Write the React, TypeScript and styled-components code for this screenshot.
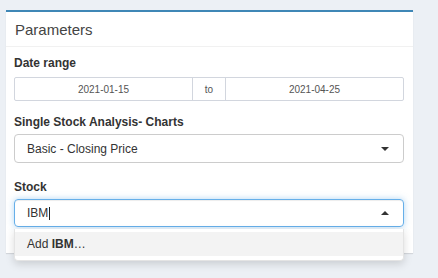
import React from 'react';
import styled, { createGlobalStyle } from 'styled-components';

const GlobalStyle = createGlobalStyle`
  html, body {
    margin: 0;
    padding: 0;
    background: #ecf0f5;
  }
  body {
    font-family: 'Liberation Sans', Arial, sans-serif;
  }
`;

const Page = styled.div`
  box-sizing: border-box;
  width: 438px;
  height: 278px;
  padding: 10px 0 0 6px;
  background: #ecf0f5;
  overflow: hidden;
`;

const Box = styled.div`
  position: relative;
  width: 407px;
  background: #fff;
  border-top: 2px solid #3f87b6;
  box-shadow: 0 1px 1px rgba(0, 0, 0, 0.1);
`;

const BoxHeader = styled.div`
  box-sizing: border-box;
  height: 35px;
  padding: 0 9px;
  display: flex;
  align-items: center;
  font-size: 15px;
  color: #444;
  border-bottom: 1px solid #f1f1f1;
`;

const BoxBody = styled.div`
  padding: 9px 9px 12px 8px;
`;

const FormGroup = styled.div<{ $gap: number }>`
  margin-bottom: ${(p) => p.$gap}px;
`;

const Label = styled.div<{ $space?: number }>`
  font-size: 12px;
  line-height: 14px;
  font-weight: bold;
  color: #333;
  margin-bottom: ${(p) => p.$space ?? 5}px;
`;

const DateGroup = styled.div`
  display: flex;
  height: 24px;
  border: 1px solid #d2d6de;
  border-radius: 2px;
  box-sizing: border-box;
`;

const DateField = styled.div`
  flex: 1;
  display: flex;
  align-items: center;
  justify-content: center;
  font-size: 10px;
  color: #555;
`;

const Addon = styled.div`
  width: 32px;
  display: flex;
  align-items: center;
  justify-content: center;
  font-size: 10px;
  color: #555;
  border-left: 1px solid #d2d6de;
  border-right: 1px solid #d2d6de;
`;

const SelectBox = styled.div<{ $focused?: boolean }>`
  box-sizing: border-box;
  height: ${(p) => (p.$focused ? 28 : 29)}px;
  padding: 0 14px 0 12px;
  display: flex;
  align-items: center;
  justify-content: space-between;
  font-size: 12px;
  color: #333;
  border: 1px solid ${(p) => (p.$focused ? '#66afe9' : '#ccc')};
  border-radius: 4px;
  box-shadow: ${(p) =>
    p.$focused
      ? 'inset 0 1px 1px rgba(0,0,0,.075), 0 0 6px rgba(102,175,233,.5)'
      : 'none'};
`;

const Caret = styled.span<{ $up?: boolean }>`
  width: 0;
  height: 0;
  border-left: 4px solid transparent;
  border-right: 4px solid transparent;
  ${(p) =>
    p.$up ? 'border-bottom: 4px solid #333;' : 'border-top: 4px solid #333;'}
`;

const TypedText = styled.span`
  display: flex;
  align-items: center;
`;

const Cursor = styled.span`
  display: inline-block;
  width: 1px;
  height: 13px;
  margin-left: 1px;
  background: #222;
`;

const StockWrap = styled.div`
  position: relative;
`;

const Dropdown = styled.div`
  position: absolute;
  left: 0;
  right: 0;
  top: 30px;
  padding: 3px 0 4px;
  background: #fff;
  border: 1px solid #e4e4e4;
  border-top: 0;
  border-radius: 0 0 4px 4px;
  box-shadow: 0 3px 8px rgba(0, 0, 0, 0.15);
  z-index: 2;
`;

const Option = styled.div`
  height: 24px;
  padding-left: 12px;
  display: flex;
  align-items: center;
  font-size: 12px;
  color: #333;
  background: #f3f3f3;
`;

const App = () => {
  return (
    <Page>
      <GlobalStyle />
      <Box>
        <BoxHeader>Parameters</BoxHeader>
        <BoxBody>
          <FormGroup $gap={14}>
            <Label $space={7}>Date range</Label>
            <DateGroup>
              <DateField>2021-01-15</DateField>
              <Addon>to</Addon>
              <DateField>2021-04-25</DateField>
            </DateGroup>
          </FormGroup>
          <FormGroup $gap={17}>
            <Label>Single Stock Analysis- Charts</Label>
            <SelectBox>
              <span>Basic - Closing Price</span>
              <Caret />
            </SelectBox>
          </FormGroup>
          <FormGroup $gap={14}>
            <Label>Stock</Label>
            <StockWrap>
              <SelectBox $focused>
                <TypedText>
                  IBM
                  <Cursor />
                </TypedText>
                <Caret $up />
              </SelectBox>
              <Dropdown>
                <Option>
                  Add&nbsp;<b>IBM</b>…
                </Option>
              </Dropdown>
            </StockWrap>
          </FormGroup>
        </BoxBody>
      </Box>
    </Page>
  );
};

export default App;
